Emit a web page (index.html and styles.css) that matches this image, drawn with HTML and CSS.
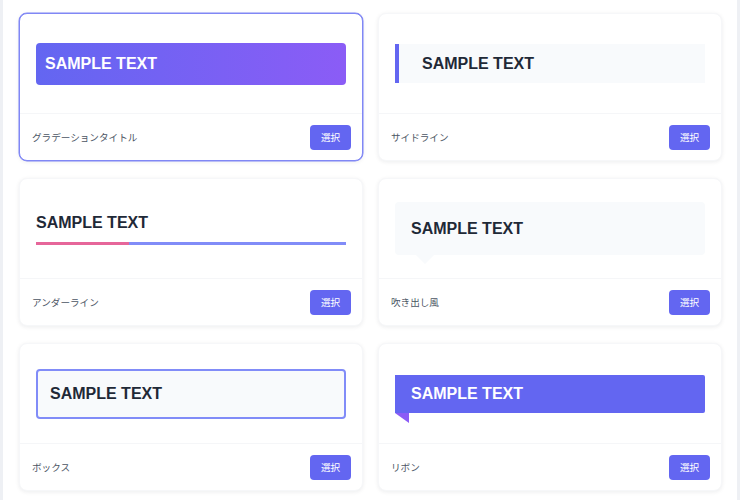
FILE: index.html
```html
<!DOCTYPE html>
<html lang="ja">
<head>
<meta charset="utf-8">
<title>タイトルスタイル選択</title>
<link rel="stylesheet" href="styles.css">
</head>
<body>
<div class="panel">
  <div class="grid">
    <div class="card selected">
      <div class="preview"><div class="t-gradient">SAMPLE TEXT</div></div>
      <div class="footer"><span class="label">グラデーションタイトル</span><button class="btn">選択</button></div>
    </div>
    <div class="card">
      <div class="preview"><div class="t-side">SAMPLE TEXT</div></div>
      <div class="footer"><span class="label">サイドライン</span><button class="btn">選択</button></div>
    </div>
    <div class="card">
      <div class="preview"><div class="t-under">SAMPLE TEXT</div></div>
      <div class="footer"><span class="label">アンダーライン</span><button class="btn">選択</button></div>
    </div>
    <div class="card">
      <div class="preview"><div class="t-bubble">SAMPLE TEXT</div></div>
      <div class="footer"><span class="label">吹き出し風</span><button class="btn">選択</button></div>
    </div>
    <div class="card">
      <div class="preview"><div class="t-box">SAMPLE TEXT</div></div>
      <div class="footer"><span class="label">ボックス</span><button class="btn">選択</button></div>
    </div>
    <div class="card">
      <div class="preview"><div class="t-ribbon">SAMPLE TEXT</div></div>
      <div class="footer"><span class="label">リボン</span><button class="btn">選択</button></div>
    </div>
  </div>
</div>
</body>
</html>
```

FILE: styles.css
```css
html, body {
  margin: 0;
  padding: 0;
}
body {
  background: #eef0f4;
  font-family: "Liberation Sans", Arial, "Noto Sans CJK JP", sans-serif;
  height: 500px;
  overflow: hidden;
}
.panel {
  margin-left: 3px;
  width: 734px;
  height: 500px;
  background: #ffffff;
  box-sizing: border-box;
  padding: 13px 15px 0 16px;
}
.grid {
  display: grid;
  grid-template-columns: 1fr 1fr;
  column-gap: 15px;
  row-gap: 17px;
}
.card {
  background: #fff;
  border: 1px solid #f6f7f9;
  border-radius: 8px;
  box-shadow: 0 1px 4px rgba(15, 23, 42, 0.08);
  height: 148px;
  box-sizing: border-box;
  display: flex;
  flex-direction: column;
}
.card.selected {
  border-color: #8087f5;
  box-shadow: 0 0 0 0.5px #8087f5, 0 1px 4px rgba(15, 23, 42, 0.08);
}
.preview {
  height: 99px;
  padding: 0 16px;
  display: flex;
  align-items: center;
  border-bottom: 1px solid #f5f6f8;
}
.preview > div {
  flex: 1;
  font-size: 16px;
  font-weight: 700;
  color: #1f2937;
  box-sizing: border-box;
}
.footer {
  flex: 1;
  display: flex;
  align-items: center;
  justify-content: space-between;
  padding: 0 11px 0 12px;
}
.label {
  font-family: "Noto Sans CJK JP", sans-serif;
  font-size: 9.6px;
  color: #4b5563;
}
.btn {
  font-family: "Noto Sans CJK JP", sans-serif;
  font-size: 9.6px;
  color: #fff;
  background: #6366f1;
  border: none;
  border-radius: 4px;
  width: 41px;
  height: 25px;
  padding: 0;
}
.t-gradient {
  background: linear-gradient(90deg, #6366f1, #8b5cf6);
  color: #fff !important;
  border-radius: 4px;
  line-height: 22px;
  padding: 10px 9px;
}
.t-side {
  background: #f8fafc;
  border-left: 4px solid #6366f1;
  line-height: 19px;
  padding: 10px 23px;
}
.t-under {
  line-height: 20px;
  padding-bottom: 9px;
  border-bottom: 3px solid #818cf8;
  position: relative;
}
.t-under::after {
  content: "";
  position: absolute;
  left: 0;
  bottom: -3px;
  width: 30%;
  height: 3px;
  background: #e6669a;
}
.t-bubble {
  background: #f8fafc;
  border-radius: 4px;
  line-height: 21px;
  padding: 16px;
  position: relative;
}
.t-bubble::after {
  content: "";
  position: absolute;
  left: 21px;
  top: 100%;
  border-left: 9px solid transparent;
  border-right: 9px solid transparent;
  border-top: 9px solid #f8fafc;
}
.t-box {
  background: #f8fafc;
  border: 2px solid #818cf8;
  border-radius: 4px;
  line-height: 22px;
  padding: 12px 12px;
}
.t-ribbon {
  background: #6366f1;
  color: #fff !important;
  line-height: 18px;
  padding: 10px 16px;
  border-radius: 0 2px 2px 0;
  position: relative;
}
.t-ribbon::after {
  content: "";
  position: absolute;
  left: 0;
  top: 100%;
  border-left: 14px solid transparent;
  border-top: 10px solid #8b5cf6;
}
```
